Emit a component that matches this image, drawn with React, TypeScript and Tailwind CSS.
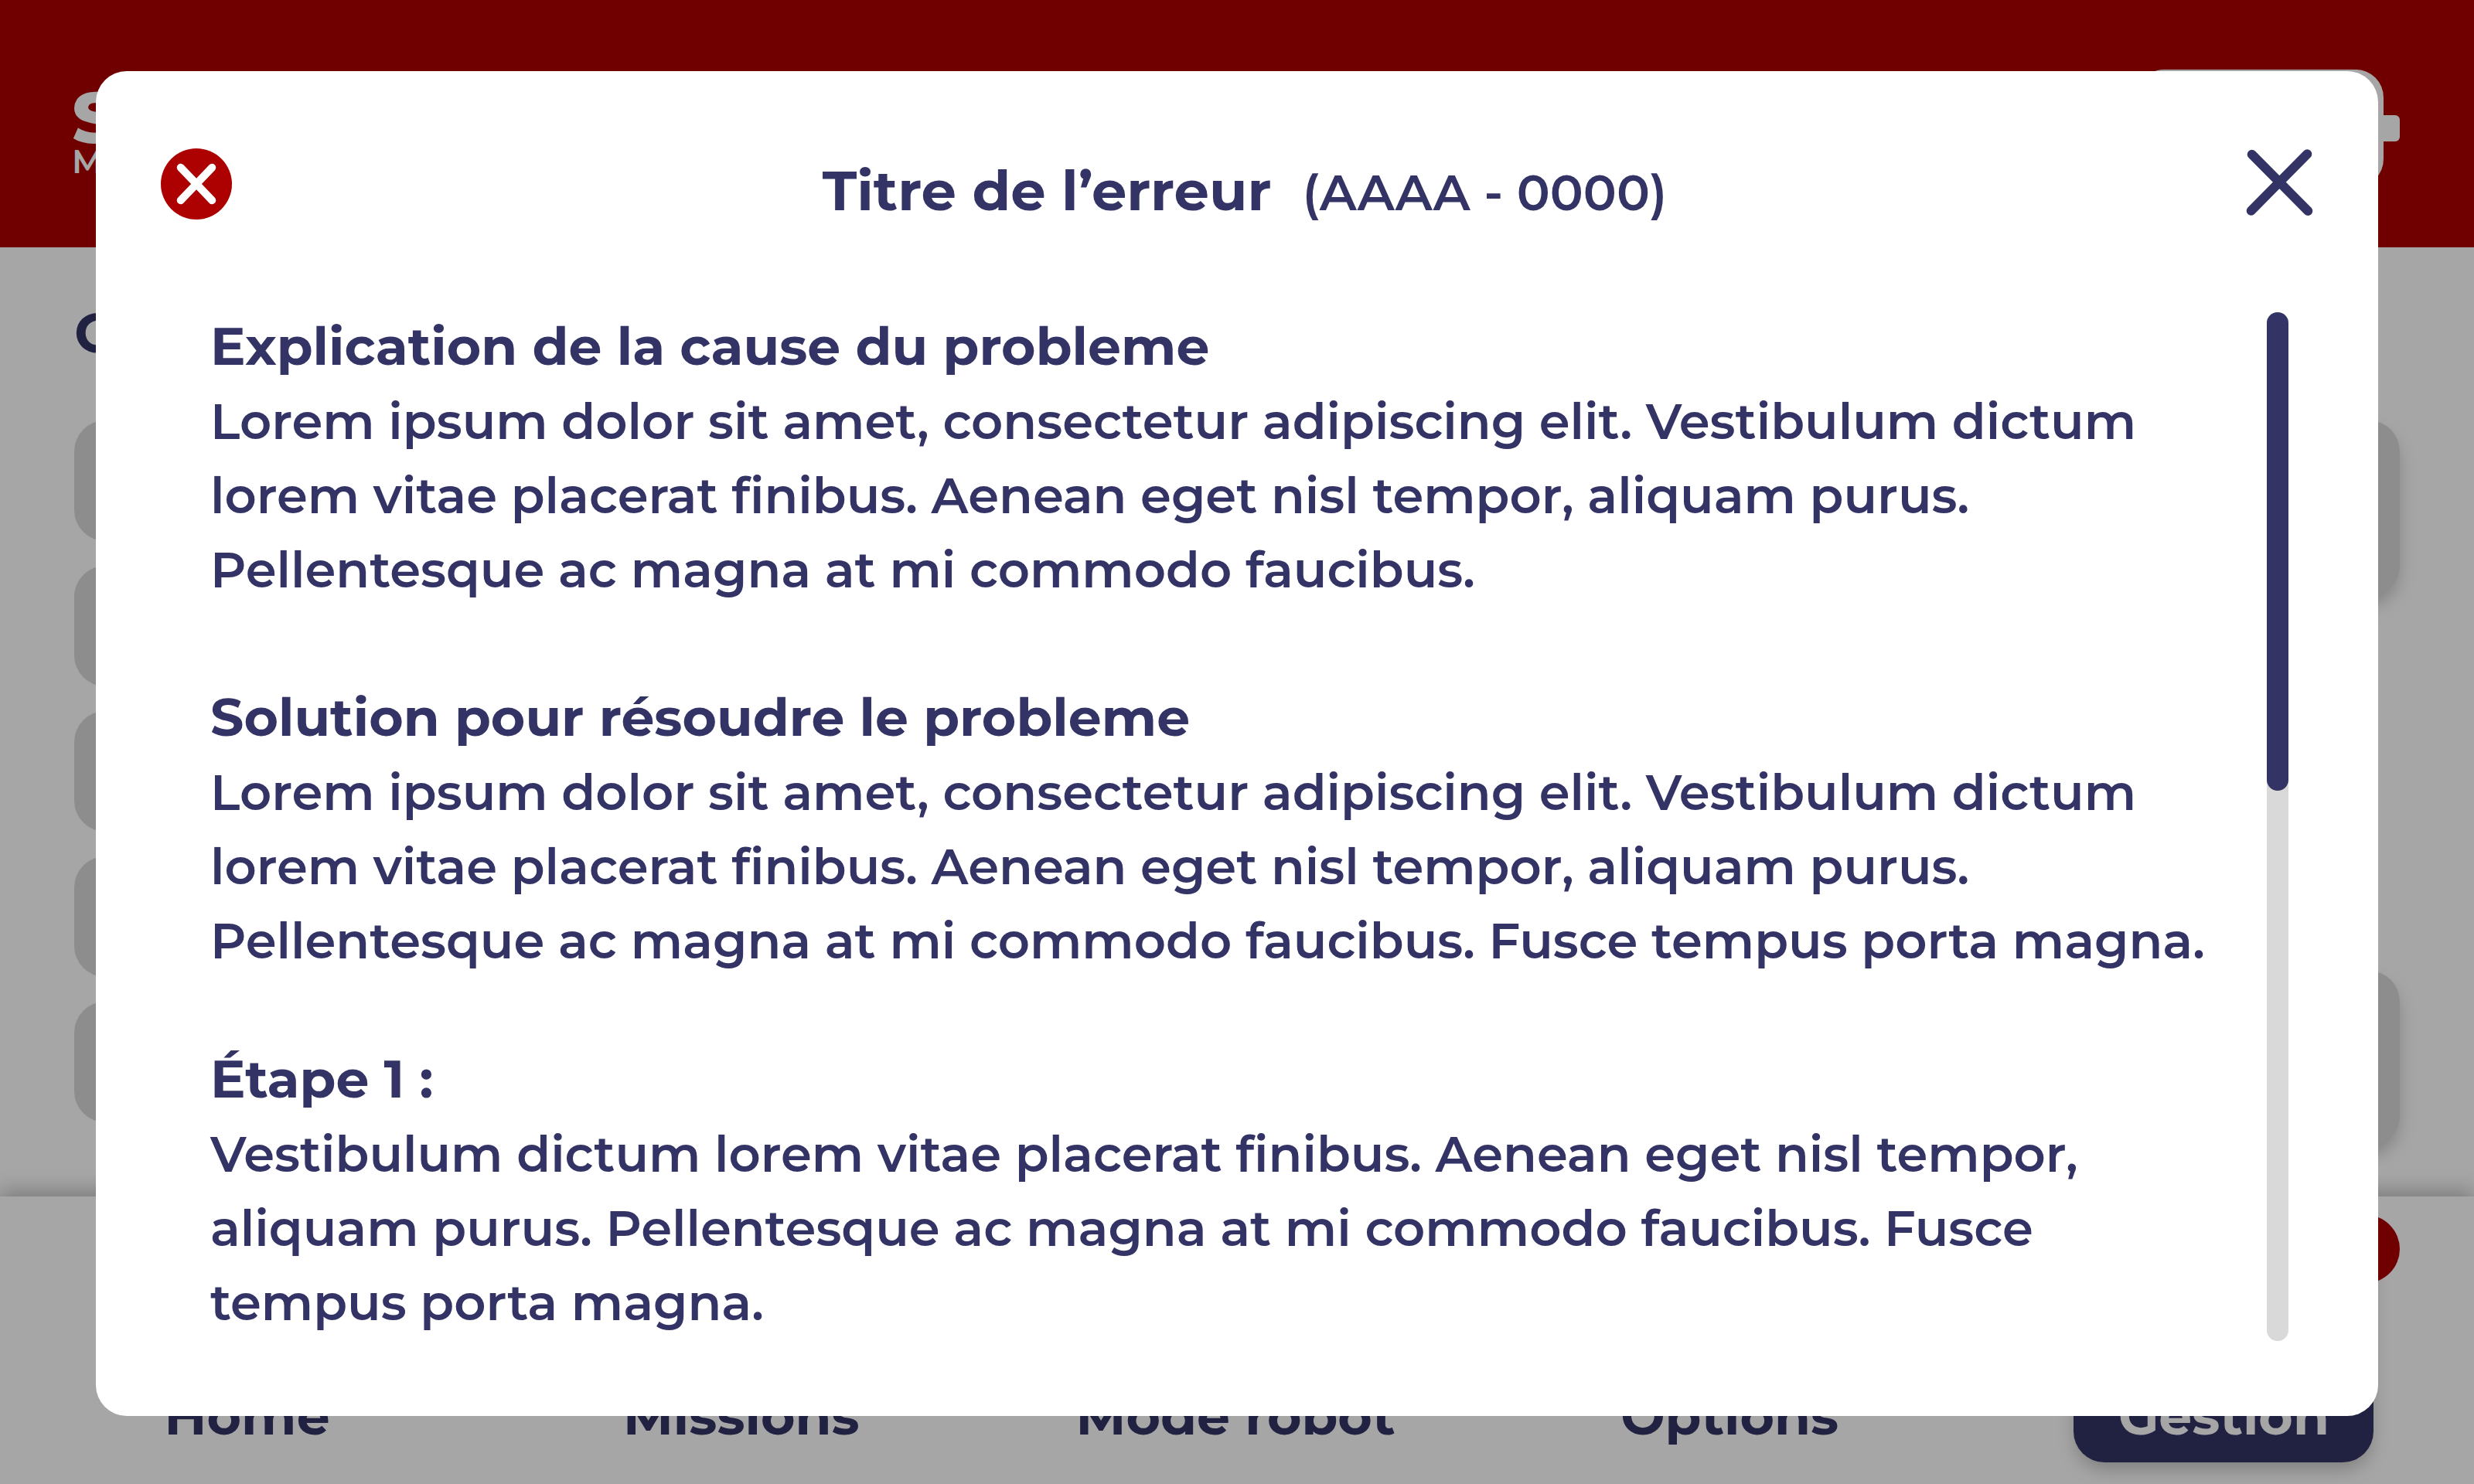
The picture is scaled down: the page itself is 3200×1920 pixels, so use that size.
import React from "react";

const LEFT_CARDS = ["a", "b", "c", "d", "e"];
const TABS = ["Home", "Missions", "Mode robot", "Options", "Gestion"];

const SECTIONS = [
  {
    title: "Explication de la cause du probleme",
    spacing: "mb-[94px]",
    lines: [
      "Lorem ipsum dolor sit amet, consectetur adipiscing elit. Vestibulum dictum",
      "lorem vitae placerat finibus. Aenean eget nisl tempor, aliquam purus.",
      "Pellentesque ac magna at mi commodo faucibus.",
    ],
  },
  {
    title: "Solution pour résoudre le probleme",
    spacing: "mb-[82px]",
    lines: [
      "Lorem ipsum dolor sit amet, consectetur adipiscing elit. Vestibulum dictum",
      "lorem vitae placerat finibus. Aenean eget nisl tempor, aliquam purus.",
      "Pellentesque ac magna at mi commodo faucibus. Fusce tempus porta magna.",
    ],
  },
  {
    title: "Étape 1 :",
    spacing: "mb-0",
    lines: [
      "Vestibulum dictum lorem vitae placerat finibus. Aenean eget nisl tempor,",
      "aliquam purus. Pellentesque ac magna at mi commodo faucibus. Fusce",
      "tempus porta magna.",
    ],
  },
];

function Battery() {
  return (
    <div className="flex items-center">
      <div className="h-[152px] w-[320px] rounded-[36px] bg-white" />
      <div className="h-[34px] w-[21px] rounded-r-[6px] bg-white" />
    </div>
  );
}

function Backdrop() {
  return (
    <div className="flex min-h-screen flex-col bg-white" aria-hidden="true">
      <header className="flex h-80 items-start justify-between bg-[#ad0000] pt-[90px] pr-24 pl-[93px] text-white">
        <div className="pt-5">
          <p className="text-[92px] leading-[84px] font-extrabold">S</p>
          <p className="text-[42px] leading-[30px] font-semibold">M</p>
        </div>
        <Battery />
      </header>
      <main className="flex grow flex-col px-24 pt-[62px]">
        <h1 className="text-[72px] leading-[96px] font-bold">C</h1>
        <div className="mt-[66px] flex justify-between gap-16">
          <div className="flex w-2/5 flex-col gap-8">
            {LEFT_CARDS.map((id) => (
              <div key={id} className="h-[156px] rounded-[40px] bg-[#d9d9d9]" />
            ))}
          </div>
          <div className="flex w-2/5 flex-col gap-[484px]">
            <div className="h-[228px] rounded-[40px] bg-[#d9d9d9] shadow-[0_12px_24px_-4px_rgba(0,0,0,0.25)]" />
            <div className="h-[228px] rounded-[40px] bg-[#d9d9d9] shadow-[0_12px_24px_-4px_rgba(0,0,0,0.25)]" />
          </div>
        </div>
      </main>
      <nav className="relative grid h-[372px] grid-cols-5 items-end bg-white pr-1 pb-7 shadow-[0_-8px_24px_rgba(0,0,0,0.25)]">
        {TABS.map((tab) => (
          <button
            key={tab}
            type="button"
            className={
              tab === "Gestion"
                ? "mx-auto flex h-[316px] w-[388px] items-end justify-center rounded-[40px] bg-[#333366] pb-4 text-[68px] leading-[88px] font-bold text-white shadow-[0_12px_24px_-4px_rgba(0,0,0,0.25)]"
                : "mx-auto flex h-[316px] w-[460px] items-end justify-center rounded-[40px] pb-4 text-[68px] leading-[88px] font-bold"
            }
          >
            {tab}
          </button>
        ))}
        <span className="absolute top-6 right-24 size-[88px] rounded-full bg-[#ad0000]" />
      </nav>
    </div>
  );
}

export default function App() {
  return (
    <div className="font-['Montserrat','Inter',sans-serif] text-[#333366]">
      <Backdrop />
      <div className="fixed inset-0 flex bg-black/35 px-[124px] pt-[92px] pb-[88px]">
        <section
          role="dialog"
          aria-modal="true"
          aria-labelledby="error-title"
          className="flex min-w-0 grow flex-col rounded-[40px] bg-white"
        >
          <header className="flex h-[208px] items-start justify-between pt-[100px] pr-[84px] pl-[84px]">
            <svg className="size-[92px]" viewBox="0 0 92 92" aria-hidden="true">
              <circle cx="46" cy="46" r="46" fill="#ad0000" />
              <path d="M25.7 24.8 66.3 67.2M66.3 24.8 25.7 67.2" stroke="#fff" strokeWidth="10" strokeLinecap="round" />
            </svg>
            <h2 id="error-title" className="ml-4 flex items-baseline gap-10 text-[72px] leading-[108px] font-bold whitespace-nowrap">
              Titre de l’erreur
              <span className="text-[64px] font-semibold">(AAAA - 0000)</span>
            </h2>
            <button type="button" aria-label="Fermer">
              <svg className="size-[88px]" viewBox="0 0 88 88" fill="none" stroke="#333366" strokeWidth="12" strokeLinecap="round">
                <path d="M8.7 7.7 81.3 81M80.3 7.3 7.7 80.7" />
              </svg>
            </button>
          </header>
          <div className="mt-[99px] mb-[97px] flex grow justify-between pr-[116px] pl-[148px]">
            <div className="text-[64px] leading-[96px] font-semibold whitespace-nowrap">
              {SECTIONS.map((section) => (
                <article key={section.title} className={section.spacing}>
                  <h3 className="text-[68px] leading-[98px] font-bold">{section.title}</h3>
                  <p>
                    {section.lines.map((line) => (
                      <span key={line} className="block">
                        {line}
                      </span>
                    ))}
                  </p>
                </article>
              ))}
            </div>
            <div className="mt-[5px] w-7 rounded-full bg-[#d9d9d9]">
              <div className="h-[619px] rounded-full bg-[#333366]" />
            </div>
          </div>
        </section>
      </div>
    </div>
  );
}
